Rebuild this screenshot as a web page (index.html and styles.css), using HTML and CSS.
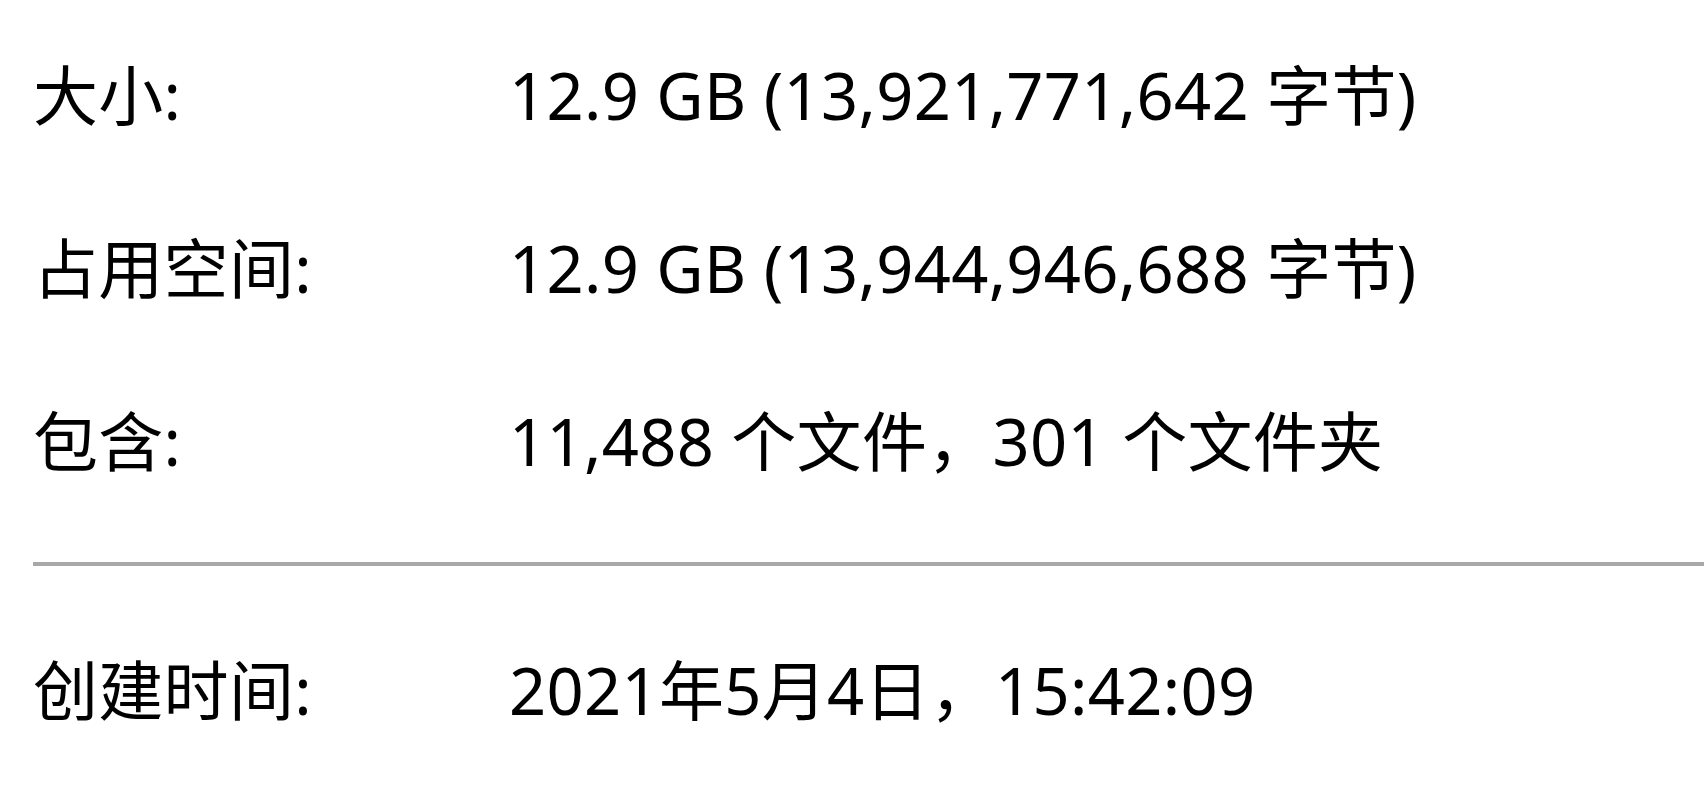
FILE: index.html
```html
<!DOCTYPE html>
<html lang="zh-CN">
<head>
    <meta charset="UTF-8" />
    <title>属性</title>
    <link rel="stylesheet" href="styles.css">
</head>
<body>
<div class="props">
    <!-- 大小信息 -->
    <div class="row">
        <div class="label">大小:</div>
        <div class="value">12.9 GB (13,921,771,642 字节)</div>
    </div>
    <div class="row">
        <div class="label">占用空间:</div>
        <div class="value">12.9 GB (13,944,946,688 字节)</div>
    </div>
    <div class="row">
        <div class="label">包含:</div>
        <div class="value">11,488 个文件，301 个文件夹</div>
    </div>

    <div class="divider"></div>

    <!-- 时间 -->
    <div class="row">
        <div class="label">创建时间:</div>
        <div class="value">2021年5月4日，15:42:09</div>
    </div>
</div>
</body>
</html>
```

FILE: styles.css
```css
body {
    margin: 0;
    background: #fff;
    color: #000;
    font-family: "Noto Sans", "Noto Sans CJK SC", sans-serif;
    font-size: 65px;
    letter-spacing: 0.3px;
    overflow: hidden;
}
.props {
    padding: 9px 0 0 33px;
}
.row {
    display: flex;
    height: 173px;
    line-height: 173px;
    white-space: nowrap;
}
.label {
    width: 476px;
    flex-shrink: 0;
}
.divider {
    height: 4px;
    margin: 34px 0 38px;
    background: #a8a8a8;
}
```
